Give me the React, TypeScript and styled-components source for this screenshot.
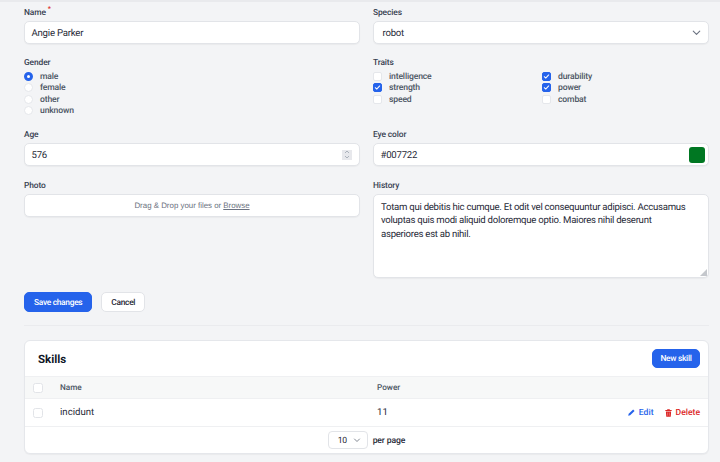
import React from "react";
import styled, { createGlobalStyle } from "styled-components";

const Global = createGlobalStyle`
  html, body { margin: 0; padding: 0; background: #f3f4f6; overflow: hidden; }
  * { box-sizing: border-box; }
  body { font-family: Roboto, "Noto Sans", sans-serif; color: #1f2937; text-rendering: geometricPrecision; }
`;

const Page = styled.div`
  width: 720px;
  height: 462px;
  overflow: hidden;
  padding: 0 11px 0 24px;
  border-top: 2px solid #e9eaed;
`;

const Form = styled.div`
  display: grid;
  grid-template-columns: 336px 336px;
  column-gap: 13px;
  padding-top: 4px;
`;

const Field = styled.div<{ $h: number }>`
  height: ${(p) => p.$h}px;
`;

const Label = styled.div`
  font-size: 8.4px;
  letter-spacing: -0.1px;
  line-height: 12px;
  height: 13px;
  padding-top: 1px;
  font-weight: 500;
  color: #374151;
  margin-bottom: 2px;
`;

const Req = styled.sup`
  color: #dc2626;
  font-size: 7px;
  line-height: 0;
  margin-left: 2px;
`;

const inputBox = `
  background: #fff;
  border: 1px solid #e2e4e8;
  border-radius: 5px;
  box-shadow: 0 1px 1px rgba(0,0,0,.04);
`;

const Input = styled.div`
  ${inputBox}
  height: 23px;
  display: flex;
  align-items: center;
  justify-content: space-between;
  padding: 0 3px 0 6.5px;
  font-size: 9.6px;
  letter-spacing: -0.22px;
  color: #1f2937;
`;

const SelectBox = styled(Input)`
  padding: 0 5px 0 8.5px;
`;

const Nudge = styled.span`
  padding-top: 1px;
`;

const Spin = styled.div`
  width: 10px;
  height: 10px;
  background: #e7e8ec;
  margin-right: 4px;
  display: flex;
  align-items: center;
  justify-content: center;
`;

const Swatch = styled.div`
  width: 16px;
  height: 16px;
  border-radius: 3px;
  background: #007722;
`;

const OptionList = styled.div`
  display: flex;
  flex-direction: column;
`;

const Options = styled.div`
  display: grid;
  grid-template-columns: 169px 1fr;
  grid-auto-flow: column;
  grid-template-rows: repeat(3, 11.33px);
`;

const Option = styled.div`
  height: 11.33px;
  display: flex;
  align-items: center;
  gap: 7px;
  font-size: 8.6px;
  letter-spacing: -0.15px;
  font-weight: 500;
  color: #4b5563;
`;

const Radio = styled.span<{ $on?: boolean }>`
  width: 9px;
  height: 9px;
  border-radius: 50%;
  flex: none;
  background: #fff;
  border: ${(p) => (p.$on ? "3px solid #2563eb" : "1px solid #e5e7eb")};
`;

const Check = styled.span<{ $on?: boolean }>`
  width: 9px;
  height: 9px;
  border-radius: 2px;
  flex: none;
  display: flex;
  align-items: center;
  justify-content: center;
  background: ${(p) => (p.$on ? "#2563eb" : "#fff")};
  border: 1px solid ${(p) => (p.$on ? "#2563eb" : "#e5e7eb")};
`;

const Drop = styled.div`
  ${inputBox}
  height: 23px;
  display: flex;
  align-items: center;
  justify-content: center;
  font-family: "Liberation Sans", Arial, sans-serif;
  font-size: 7.9px;
  color: #6b7280;
`;

const Browse = styled.span`
  text-decoration: underline;
  margin-left: 2px;
`;

const TextArea = styled.div`
  ${inputBox}
  height: 84px;
  position: relative;
  padding: 5.5px 20px 0 7px;
  font-size: 9.6px;
  letter-spacing: -0.27px;
  line-height: 13.7px;
  color: #1f2937;
`;

const Grip = styled.svg`
  position: absolute;
  right: 1px;
  bottom: 1px;
`;

const Actions = styled.div`
  display: flex;
  gap: 9px;
  margin-top: 13px;
  padding-bottom: 13px;
  border-bottom: 1px solid #eaebee;
  width: 685px;
`;

const Btn = styled.div<{ $primary?: boolean }>`
  height: 20px;
  display: flex;
  align-items: center;
  justify-content: center;
  border-radius: 5px;
  font-size: 8.4px;
  letter-spacing: -0.3px;
  font-weight: 500;
  padding: 1px 9px 0;
  background: ${(p) => (p.$primary ? "#2563eb" : "#fff")};
  color: ${(p) => (p.$primary ? "#fff" : "#1f2937")};
  border: 1px solid ${(p) => (p.$primary ? "#2563eb" : "#e2e4e8")};
`;

const Card = styled.div`
  margin-top: 14px;
  width: 685px;
  background: #fff;
  border: 1px solid #e5e7eb;
  border-radius: 6px;
  box-shadow: 0 1px 1px rgba(0,0,0,.04);
  overflow: hidden;
`;

const CardHead = styled.div`
  height: 35px;
  display: flex;
  align-items: center;
  justify-content: space-between;
  padding: 0 8px 0 13px;
`;

const Title = styled.div`
  font-size: 11.5px;
  font-weight: 700;
  color: #111827;
`;

const NewBtn = styled(Btn)`
  height: 19px;
  width: 48px;
  padding: 0;
`;

const Row = styled.div<{ $head?: boolean }>`
  display: grid;
  grid-template-columns: 27px 317px 1fr auto;
  align-items: center;
  padding: 0 8px;
  height: ${(p) => (p.$head ? "22px" : "28px")};
  background: ${(p) => (p.$head ? "#f7f8f8" : "#fff")};
  border-top: 1px solid #eff0f2;
  font-size: ${(p) => (p.$head ? "8.2px" : "9.6px")};
  font-weight: ${(p) => (p.$head ? 500 : 400)};
  color: ${(p) => (p.$head ? "#4b5563" : "#1f2937")};
`;

const RowBox = styled.span`
  display: block;
  width: 10px;
  height: 10px;
  border: 1px solid #e2e4e8;
  border-radius: 2.5px;
  background: #fff;
`;

const RowActions = styled.div`
  display: flex;
  gap: 10px;
  font-size: 8.6px;
  font-weight: 500;
`;

const Action = styled.span<{ $color: string }>`
  display: flex;
  align-items: center;
  gap: 3px;
  color: ${(p) => p.$color};
`;

const Foot = styled.div`
  height: 27px;
  border-top: 1px solid #eff0f2;
  display: flex;
  align-items: center;
  justify-content: center;
  gap: 5px;
  font-size: 8.6px;
  letter-spacing: -0.1px;
  font-weight: 500;
  color: #1f2937;
`;

const PerPage = styled.div`
  width: 40px;
  height: 18px;
  border: 1px solid #e2e4e8;
  border-radius: 4px;
  display: flex;
  align-items: center;
  justify-content: space-between;
  padding: 0 5px 0 9px;
  font-weight: 400;
`;

const Chevron = ({ size, color }: { size: number; color: string }) => (
  <svg width={size} height={size} viewBox="0 0 20 20" fill="none">
    <path d="M5 8l5 5 5-5" stroke={color} strokeWidth="1.7" strokeLinecap="round" strokeLinejoin="round" />
  </svg>
);

const Tick = () => (
  <svg width="7" height="7" viewBox="0 0 16 16" fill="none">
    <path d="M3 8.5l3.2 3L13 4.5" stroke="#fff" strokeWidth="2.4" strokeLinecap="round" strokeLinejoin="round" />
  </svg>
);

export default function App() {
  return (
    <>
      <Global />
      <Page>
        <Form>
          <Field $h={50}>
            <Label>Name<Req>*</Req></Label>
            <Input><Nudge>Angie Parker</Nudge></Input>
          </Field>
          <Field $h={50}>
            <Label>Species</Label>
            <SelectBox><Nudge>robot</Nudge><Chevron size={13} color="#6b7280" /></SelectBox>
          </Field>
          <Field $h={72}>
            <Label>Gender</Label>
            <OptionList>
              <Option><Radio $on /><Nudge>male</Nudge></Option>
              <Option><Radio /><Nudge>female</Nudge></Option>
              <Option><Radio /><Nudge>other</Nudge></Option>
              <Option><Radio /><Nudge>unknown</Nudge></Option>
            </OptionList>
          </Field>
          <Field $h={72}>
            <Label>Traits</Label>
            <Options>
              <Option><Check /><Nudge>intelligence</Nudge></Option>
              <Option><Check $on><Tick /></Check><Nudge>strength</Nudge></Option>
              <Option><Check /><Nudge>speed</Nudge></Option>
              <Option><Check $on><Tick /></Check><Nudge>durability</Nudge></Option>
              <Option><Check $on><Tick /></Check><Nudge>power</Nudge></Option>
              <Option><Check /><Nudge>combat</Nudge></Option>
            </Options>
          </Field>
          <Field $h={51}>
            <Label>Age</Label>
            <Input>
              <Nudge>576</Nudge>
              <Spin>
                <svg width="6" height="9" viewBox="0 0 6 9" fill="none">
                  <path d="M1 3l2-2 2 2M1 6l2 2 2-2" stroke="#9ca3af" strokeWidth=".8" />
                </svg>
              </Spin>
            </Input>
          </Field>
          <Field $h={51}>
            <Label>Eye color</Label>
            <Input><Nudge>#007722</Nudge><Swatch /></Input>
          </Field>
          <Field $h={100}>
            <Label>Photo</Label>
            <Drop>Drag &amp; Drop your files or <Browse>Browse</Browse></Drop>
          </Field>
          <Field $h={100}>
            <Label>History</Label>
            <TextArea>
              Totam qui debitis hic cumque. Et odit vel consequuntur adipisci. Accusamus voluptas quis modi aliquid doloremque optio. Maiores nihil deserunt asperiores est ab nihil.
              <Grip width="7" height="7" viewBox="0 0 7 7">
                <path d="M7 0v7H0z" fill="#c4c7cc" />
              </Grip>
            </TextArea>
          </Field>
        </Form>
        <Actions>
          <Btn $primary>Save changes</Btn>
          <Btn>Cancel</Btn>
        </Actions>
        <Card>
          <CardHead>
            <Title>Skills</Title>
            <NewBtn $primary>New skill</NewBtn>
          </CardHead>
          <Row $head>
            <RowBox />
            <span>Name</span>
            <span>Power</span>
            <span />
          </Row>
          <Row>
            <RowBox />
            <span>incidunt</span>
            <span>11</span>
            <RowActions>
              <Action $color="#2563eb">
                <svg width="9" height="9" viewBox="0 0 20 20" fill="#2563eb">
                  <path d="M13.6 3.2l3.2 3.2-9.8 9.8-4.4 1.2 1.2-4.4z" />
                </svg>
                Edit
              </Action>
              <Action $color="#dc2626">
                <svg width="9" height="10" viewBox="0 0 20 20" fill="#dc2626">
                  <path d="M7.5 1.5h5l.8 1.8H17v2H3v-2h3.7zM4.2 6.5h11.6l-.8 12H5z" />
                  <path d="M8 9v7M12 9v7" stroke="#f6b5b5" strokeWidth="1" />
                </svg>
                Delete
              </Action>
            </RowActions>
          </Row>
          <Foot>
            <PerPage><Nudge>10</Nudge><Chevron size={10} color="#6b7280" /></PerPage>
            <Nudge>per page</Nudge>
          </Foot>
        </Card>
      </Page>
    </>
  );
}
